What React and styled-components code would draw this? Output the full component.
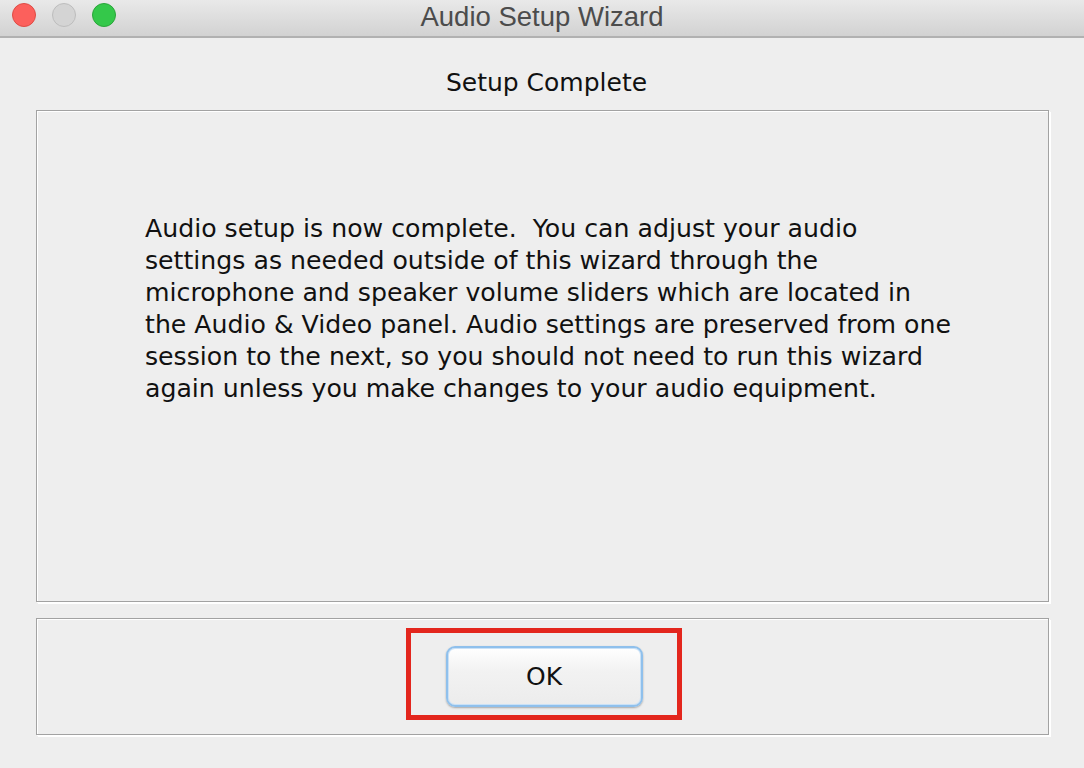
import React from 'react';
import styled, { createGlobalStyle } from 'styled-components';

const GlobalStyle = createGlobalStyle`
  html, body {
    margin: 0;
    padding: 0;
    background: #eeeeee;
  }
`;

const Window = styled.div`
  width: 1084px;
  height: 768px;
  display: flex;
  flex-direction: column;
  background: #eeeeee;
  overflow: hidden;
`;

const TitleBar = styled.div`
  position: relative;
  height: 36px;
  flex-shrink: 0;
  display: flex;
  align-items: center;
  justify-content: center;
  background: linear-gradient(#e9e9e9, #d2d2d2);
  border-bottom: 2px solid #b1b1b1;
`;

const Lights = styled.div`
  position: absolute;
  left: 12px;
  top: 3px;
  display: flex;
  gap: 16px;
`;

const Light = styled.span`
  width: 22px;
  height: 22px;
  border-radius: 50%;
  background: ${p => p.$fill};
  border: 1px solid ${p => p.$edge};
`;

const WindowTitle = styled.div`
  font-family: "Liberation Sans", Arial, sans-serif;
  font-size: 27.5px;
  color: #4c4c4c;
  margin-top: -2px;
`;

const Body = styled.div`
  flex: 1;
  display: flex;
  flex-direction: column;
  padding: 0 35px 0 36px;
`;

const Heading = styled.div`
  box-sizing: border-box;
  height: 72px;
  padding: 29px 0 0 8px;
  text-align: center;
  font-family: "DejaVu Sans", Verdana, sans-serif;
  font-size: 25px;
  line-height: 32px;
  color: #111;
`;

const Etched = styled.div`
  box-sizing: border-box;
  border: 1px solid #a2a2a2;
  box-shadow: inset 1px 1px 0 #ffffff, 1px 1px 0 #ffffff, 2px 2px 0 #ffffff;
`;

const MessagePanel = styled(Etched)`
  height: 492px;
  padding: 102px 0 0 108px;
`;

const Message = styled.div`
  font-family: "DejaVu Sans", Verdana, sans-serif;
  font-size: 25.2px;
  line-height: 32px;
  color: #111;
`;

const Line = styled.div`
  white-space: pre;
`;

const ButtonPanel = styled(Etched)`
  margin-top: 16px;
  height: 117px;
  display: flex;
  align-items: center;
  justify-content: center;
  padding: 0 0 6px 2px;
`;

const Highlight = styled.div`
  border: 5px solid #e3261d;
  padding: 13px 34px 8px 35px;
`;

const OkButton = styled.button`
  width: 197px;
  height: 61px;
  border-radius: 9px;
  border: 2px solid #8fc0ec;
  background: linear-gradient(#ffffff, #f2f2f2 40%, #ececec);
  box-shadow: 0 1px 2px rgba(0, 0, 0, 0.3), inset 0 0 0 1px #c9e1f7;
  font-family: "DejaVu Sans", Verdana, sans-serif;
  font-size: 25px;
  color: #111;
  padding: 0;
`;

const lines = [
  'Audio setup is now complete.  You can adjust your audio',
  'settings as needed outside of this wizard through the',
  'microphone and speaker volume sliders which are located in',
  'the Audio & Video panel. Audio settings are preserved from one',
  'session to the next, so you should not need to run this wizard',
  'again unless you make changes to your audio equipment.',
];

export default function App() {
  return (
    <Window>
      <GlobalStyle />
      <TitleBar>
        <Lights>
          <Light $fill="#fc605c" $edge="#de4c45" />
          <Light $fill="#d4d4d4" $edge="#bdbdbd" />
          <Light $fill="#34c84a" $edge="#2aa53a" />
        </Lights>
        <WindowTitle>Audio Setup Wizard</WindowTitle>
      </TitleBar>
      <Body>
        <Heading>Setup Complete</Heading>
        <MessagePanel>
          <Message>
            {lines.map(l => <Line key={l}>{l}</Line>)}
          </Message>
        </MessagePanel>
        <ButtonPanel>
          <Highlight>
            <OkButton>OK</OkButton>
          </Highlight>
        </ButtonPanel>
      </Body>
    </Window>
  );
}
